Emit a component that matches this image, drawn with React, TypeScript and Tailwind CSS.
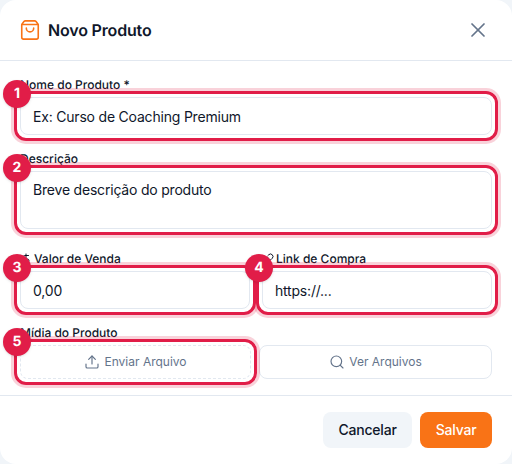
import React from 'react';
import { ShoppingBag, X, Upload, Search, DollarSign, Link as LinkIcon } from 'lucide-react';

const font = { fontFamily: 'Inter, "Liberation Sans", sans-serif' };

const Marked: React.FC<{ n: number; children: React.ReactNode }> = ({ n, children }) => (
  <div className="relative">
    {children}
    <div className="absolute -inset-[6px] rounded-[12px] border-[3px] border-[#e11d48] shadow-[0_0_0_3px_rgba(225,29,72,0.2)] pointer-events-none"></div>
    <div className="absolute -left-[17px] -top-[17px] w-7 h-7 rounded-full bg-[#e11d48] text-white text-sm font-bold flex items-center justify-center shadow">
      {n}
    </div>
  </div>
);

const inputClass = "block w-full h-[38px] px-3 rounded-lg border border-[#e2e8f0] bg-white text-sm tracking-[-0.2px] text-[#0f172a] placeholder:text-[#0f172a] focus:outline-none";

export default function App() {
  return (
    <div className="w-[512px] h-[464px] bg-[#f1f5f9] antialiased [text-rendering:geometricPrecision]" style={font}>
      <div className="w-full h-full bg-white rounded-2xl flex flex-col overflow-hidden">
        <div className="h-[61px] shrink-0 border-b border-[#e2e8f0] pl-[19px] pr-[22px] flex items-center justify-between">
          <div className="flex items-center gap-[7px]">
            <ShoppingBag className="w-[22px] h-[22px] text-[#f97316]" strokeWidth={1.75} />
            <h2 className="text-base font-semibold tracking-[-0.17px] text-[#0f172a]">Novo Produto</h2>
          </div>
          <button className="text-[#64748b]"><X className="w-6 h-6" strokeWidth={1.75} /></button>
        </div>

        <div className="flex-1 px-5 pt-4 flex flex-col gap-4">
          <div>
            <label className="block text-xs font-medium text-[#0f172a] h-4 mb-1">Nome do Produto *</label>
            <Marked n={1}>
              <input className={inputClass} placeholder="Ex: Curso de Coaching Premium" readOnly />
            </Marked>
          </div>
          <div>
            <label className="block text-xs font-medium text-[#0f172a] h-4 mb-1">Descrição</label>
            <div className="mb-[6px]">
              <Marked n={2}>
                <textarea className="block w-full h-[58px] px-3 py-2 rounded-lg border border-[#e2e8f0] bg-white text-sm tracking-[-0.2px] text-[#0f172a] placeholder:text-[#0f172a] resize-none focus:outline-none" placeholder="Breve descrição do produto" readOnly />
              </Marked>
            </div>
          </div>
          <div className="grid grid-cols-2 gap-3">
            <div>
              <label className="flex items-center gap-0.5 text-xs font-medium text-[#0f172a] h-4 mb-1">
                <DollarSign className="w-3 h-3" /> Valor de Venda
              </label>
              <Marked n={3}>
                <input className={inputClass} placeholder="0,00" readOnly />
              </Marked>
            </div>
            <div>
              <label className="flex items-center gap-0.5 text-xs font-medium text-[#0f172a] h-4 mb-1">
                <LinkIcon className="w-3 h-3" /> Link de Compra
              </label>
              <Marked n={4}>
                <input className={inputClass} placeholder="https://..." readOnly />
              </Marked>
            </div>
          </div>
          <div>
            <label className="block text-xs font-medium text-[#0f172a] h-4 mb-1">Mídia do Produto</label>
            <div className="flex gap-2">
              <div className="flex-1">
                <Marked n={5}>
                  <button className="w-full h-[34px] rounded-lg border border-dashed border-[#e2e8f0] flex items-center justify-center gap-1 text-xs text-[#64748b]">
                    <Upload className="w-4 h-4" strokeWidth={1.75} /> Enviar Arquivo
                  </button>
                </Marked>
              </div>
              <button className="flex-1 h-[34px] rounded-lg border border-[#e2e8f0] flex items-center justify-center gap-1 text-xs text-[#64748b]">
                <Search className="w-4 h-4" strokeWidth={1.75} /> Ver Arquivos
              </button>
            </div>
          </div>
        </div>

        <div className="h-[69px] shrink-0 border-t border-[#e2e8f0] px-5 flex items-center justify-end gap-2">
          <button className="h-9 w-[89px] rounded-lg bg-[#f1f5f9] text-sm font-medium tracking-[-0.2px] text-[#0f172a]">Cancelar</button>
          <button className="h-9 w-[72px] rounded-lg bg-[#f97316] text-sm font-medium tracking-[-0.2px] text-white">Salvar</button>
        </div>
      </div>
    </div>
  );
}
